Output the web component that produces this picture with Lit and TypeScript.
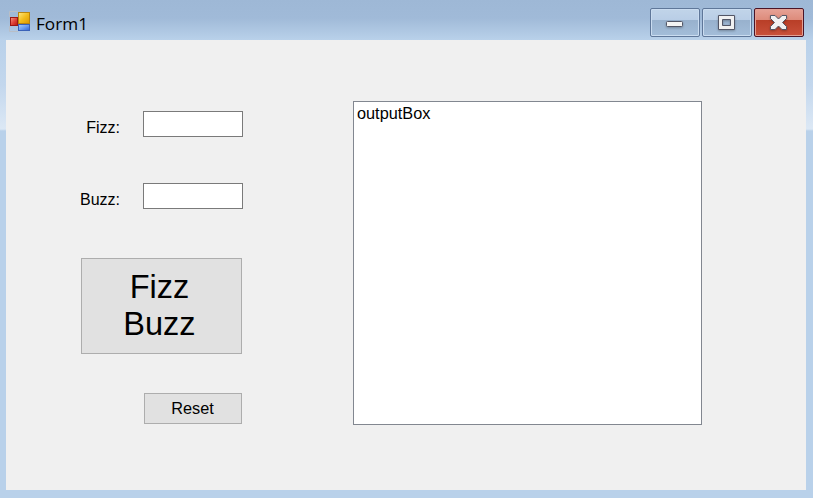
import { LitElement, html, css, svg } from "lit";
import { customElement, property } from "lit/decorators.js";

@customElement("form-icon")
class FormIcon extends LitElement {
  static styles = css`
    :host { display: block; width: 22px; height: 22px; }
    svg { display: block; }
  `;
  render() {
    return html`<svg width="22" height="22" viewBox="0 0 22 22">
      <defs>
        <linearGradient id="y" x1="0" y1="0" x2="1" y2="1">
          <stop offset="0" stop-color="#ffe680" /><stop offset=".5" stop-color="#f2bd1d" /><stop offset="1" stop-color="#dc9700" />
        </linearGradient>
        <linearGradient id="r" x1="0" y1="0" x2="1" y2="1">
          <stop offset="0" stop-color="#f59a8c" /><stop offset=".5" stop-color="#e0453a" /><stop offset="1" stop-color="#b81410" />
        </linearGradient>
        <linearGradient id="b" x1="0" y1="0" x2="1" y2="1">
          <stop offset="0" stop-color="#a9cbff" /><stop offset=".5" stop-color="#6c9ff2" /><stop offset="1" stop-color="#3364d2" />
        </linearGradient>
      </defs>
      <path d="M.5 6V.5H9M.5 15v5.500H9" fill="none" stroke="#b9bec6" />
      <rect x="9.500" y="1.500" width="11" height="11" fill="url(#y)" stroke="#b9850f" />
      <rect x="1.500" y="6.500" width="7" height="8" fill="url(#r)" stroke="#9c1714" />
      <rect x="9.500" y="13.500" width="11" height="6" fill="url(#b)" stroke="#3a62b8" />
    </svg>`;
  }
}

const glyphs = {
  minimize: svg`<rect x="16.500" y="13.500" width="16" height="5" rx="1" fill="#f4f4f4" stroke="#535666" />`,
  maximize: svg`<path fill-rule="evenodd" d="M16.500 7.500h16v14h-16zM20.500 11.500v6h8v-6z" fill="#f1f1f1" stroke="#535666" stroke-linejoin="round" />`,
  close: svg`<path d="M16.500 7.500H21L24.500 11L28 7.500H32.500V10.500L28.500 14.500L32.500 18.500V21.500H28L24.500 18L21 21.500H16.500V18.500L20.500 14.500L16.500 10.500Z" fill="#f1f1f1" stroke="#535666" stroke-linejoin="round" />`,
};

@customElement("caption-button")
class CaptionButton extends LitElement {
  @property() kind: keyof typeof glyphs = "minimize";
  static styles = css`
    :host { display: block; }
    .button {
      box-sizing: border-box; width: 50px; height: 29px; display: block; padding: 0;
      border: 1px solid #5f7799; border-radius: 2px;
      background: linear-gradient(#c1d4e9 0, #b9cee6 11px, #98b1cd 11px, #a3bdd9 100%);
      box-shadow: inset 0 0 0 1px #cadcf0;
    }
    .close {
      border-color: #4b1426;
      background: linear-gradient(#e6a296 0, #dd8b7b 11px, #b83e27 11px, #c9513b 100%);
      box-shadow: inset 0 0 0 1px #e2a094;
    }
    svg { display: block; margin: -1px; filter: drop-shadow(0 1px 1px #0004); }
  `;
  render() {
    return html`<button class="button ${this.kind}" aria-label=${this.kind}>
      <svg width="50" height="29" viewBox="0 0 50 29">${glyphs[this.kind]}</svg>
    </button>`;
  }
}

@customElement("app-root")
class AppRoot extends LitElement {
  static styles = css`
    :host {
      display: flex; flex-direction: column; box-sizing: border-box;
      width: 813px; height: 498px; padding: 0 7px 8px 6px; overflow: hidden;
      background: linear-gradient(#9eb8d6 0, #a0bad8 18px, #b9d1ea 40px, #c3d7ed 85px, #dce8f5 129px, #b9d1ea 131px);
      font: 16.3px "Liberation Sans", Arial, sans-serif; color: #000;
    }
    .titlebar { height: 40px; display: flex; align-items: flex-start; }
    .icon { margin: 11px 0 0 3px; }
    .title {
      flex: 1; margin: 11px 0 0 5px; line-height: 25px;
      font-family: "Open Sans", "Noto Sans", sans-serif; font-size: 17.2px;
    }
    .controls { display: flex; gap: 2px; margin: 8px 2px 0 0; }
    .client {
      flex: 1; box-sizing: border-box; display: flex; align-items: flex-start;
      gap: 110px; padding: 61px 104px 0 74px; background: #f0f0f0;
    }
    .left { width: 163px; padding-top: 10px; }
    .fields { display: flex; flex-direction: column; gap: 46px; }
    .field { display: flex; height: 26px; justify-content: space-between; }
    .label { width: 40px; display: flex; justify-content: flex-end; font-size: 16px; line-height: 18px; padding-top: 8px; white-space: nowrap; }
    .input { box-sizing: border-box; width: 100px; height: 26px; border: 1px solid #7a7a7a; border-radius: 0; background: #fff; padding: 0 3px; outline: 0; }
    .push { box-sizing: border-box; display: block; padding: 0; border: 1px solid #adadad; border-radius: 0; background: #e1e1e1; font: inherit; color: #000; }
    .run { width: 161px; height: 96px; margin: 49px 0 39px 1px; font-size: 32.5px; line-height: 37px; padding-right: 4px; }
    .reset { width: 98px; height: 31px; margin-left: 64px; padding-right: 1px; }
    .output {
      box-sizing: border-box; width: 349px; height: 324px; padding: 2px 3px;
      border: 1px solid #828790; background: #fff; line-height: 18px;
    }
  `;
  render() {
    return html`
      <div class="titlebar">
        <form-icon class="icon"></form-icon>
        <div class="title">Form1</div>
        <div class="controls">
          <caption-button kind="minimize"></caption-button>
          <caption-button kind="maximize"></caption-button>
          <caption-button kind="close"></caption-button>
        </div>
      </div>
      <div class="client">
        <div class="left">
          <div class="fields">
            <div class="field"><label class="label" for="fizz">Fizz:</label><input class="input" id="fizz" /></div>
            <div class="field"><label class="label" for="buzz">Buzz:</label><input class="input" id="buzz" /></div>
          </div>
          <button class="push run">Fizz<br />Buzz</button>
          <button class="push reset">Reset</button>
        </div>
        <div class="output">outputBox</div>
      </div>
    `;
  }
}
